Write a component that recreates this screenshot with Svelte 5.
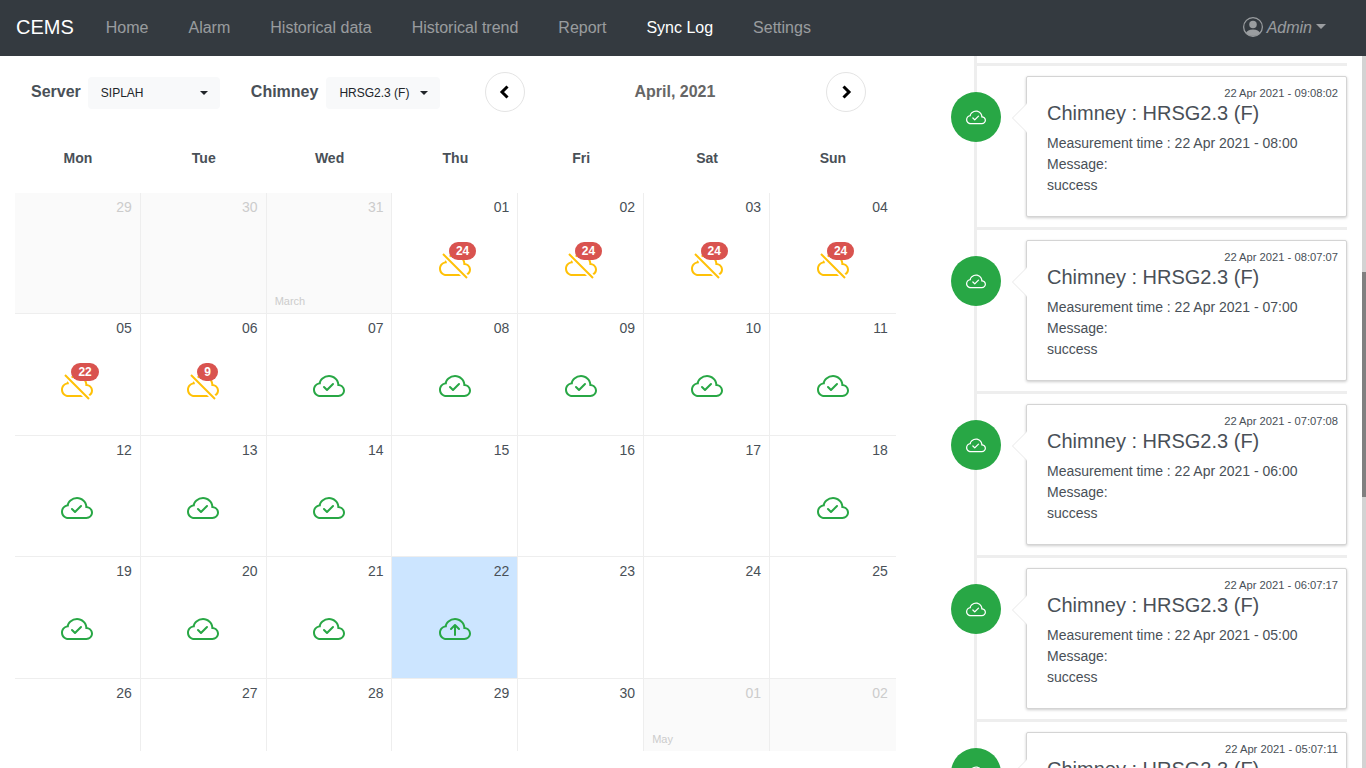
<script>
  const links = ['Home', 'Alarm', 'Historical data', 'Historical trend', 'Report', 'Sync Log', 'Settings'];
  const weekdays = ['Mon', 'Tue', 'Wed', 'Thu', 'Fri', 'Sat', 'Sun'];
  const cloud = 'M4.406 3.342A5.53 5.53 0 0 1 8 2c2.69 0 4.923 2 5.166 4.579C14.758 6.804 16 8.137 16 9.773 16 11.569 14.502 13 12.687 13H3.781C1.708 13 0 11.366 0 9.318c0-1.763 1.266-3.223 2.942-3.593.143-.863.698-1.723 1.464-2.383zm.653.757c-.757.653-1.153 1.44-1.153 2.056v.448l-.445.049C2.064 6.805 1 7.952 1 9.318 1 10.785 2.23 12 3.781 12h8.906C13.98 12 15 10.988 15 9.773c0-1.216-1.02-2.228-2.313-2.228h-.5v-.5C12.188 4.825 10.328 3 8 3a4.53 4.53 0 0 0-2.941 1.1z';
  const check = 'M10.354 6.146a.5.5 0 0 1 0 .708l-3 3a.5.5 0 0 1-.708 0l-1.5-1.5a.5.5 0 1 1 .708-.708L7 8.793l2.646-2.647a.5.5 0 0 1 .708 0z';
  const up = 'M7.646 5.146a.5.5 0 0 1 .708 0l2 2a.5.5 0 0 1-.708.708L8.5 6.707V10.5a.5.5 0 0 1-1 0V6.707L6.354 7.854a.5.5 0 1 1-.708-.708l2-2z';
  const slash = 'M3.112 5.112a3.125 3.125 0 0 0-.17.613C1.266 6.095 0 7.555 0 9.318 0 11.366 1.708 13 3.781 13H11l-1-1H3.781C2.231 12 1 10.785 1 9.318c0-1.365 1.064-2.513 2.46-2.666l.446-.05v-.447c0-.075.006-.152.018-.231l-.812-.812zm2.55-1.45l-.725-.725A5.512 5.512 0 0 1 8 2c2.69 0 4.923 2 5.166 4.579C14.758 6.804 16 8.137 16 9.773a3.2 3.2 0 0 1-1.516 2.711l-.733-.733C14.498 11.378 15 10.626 15 9.773c0-1.216-1.02-2.228-2.313-2.228h-.5v-.5C12.188 4.825 10.328 3 8 3c-.875 0-1.678.26-2.339.661z';
  const slashBar = 'M13.646 14.354l-12-12 .708-.708 12 12-.707.707z';

  const off = (d, note) => ({ d, off: true, note });
  const warn = (d, n) => ({ d, kind: 'warn', n });
  const ok = (d) => ({ d, kind: 'ok' });
  const none = (d) => ({ d });
  const days = [
    off('29'), off('30'), off('31', 'March'), warn('01', 24), warn('02', 24), warn('03', 24), warn('04', 24),
    warn('05', 22), warn('06', 9), ok('07'), ok('08'), ok('09'), ok('10'), ok('11'),
    ok('12'), ok('13'), ok('14'), none('15'), none('16'), none('17'), ok('18'),
    ok('19'), ok('20'), ok('21'), { d: '22', kind: 'up', today: true }, none('23'), none('24'), none('25'),
    none('26'), none('27'), none('28'), none('29'), none('30'), off('01', 'May'), off('02')
  ];
  const logs = [
    ['09:08:02', '08:00'],
    ['08:07:07', '07:00'],
    ['07:07:08', '06:00'],
    ['06:07:17', '05:00'],
    ['05:07:11', '04:00']
  ];
</script>

<div class="page">
  <nav class="navbar">
    <span class="brand">CEMS</span>
    <ul class="links">
      {#each links as link}
        <li class:active={link === 'Sync Log'}>{link}</li>
      {/each}
    </ul>
    <div class="user">
      <svg width="20" height="20" viewBox="0 0 16 16" fill="currentColor" aria-hidden="true">
        <path d="M13.468 12.37C12.758 11.226 11.195 10 8 10s-4.757 1.225-5.468 2.37A6.987 6.987 0 0 0 8 15a6.987 6.987 0 0 0 5.468-2.63z" />
        <path fill-rule="evenodd" d="M8 9a3 3 0 1 0 0-6 3 3 0 0 0 0 6z" />
        <path fill-rule="evenodd" d="M8 1a7 7 0 1 0 0 14A7 7 0 0 0 8 1zM0 8a8 8 0 1 1 16 0A8 8 0 0 1 0 8z" />
      </svg>
      <em>Admin</em>
      <span class="user-caret"></span>
    </div>
  </nav>

  <div class="main">
    <section class="calendar-col">
      <div class="filters">
        <span class="label">Server</span>
        <div class="select server"><span>SIPLAH</span><i class="caret"></i></div>
        <span class="label chimney-label">Chimney</span>
        <div class="select chimney"><span>HRSG2.3 (F)</span><i class="caret"></i></div>
        <div class="month-nav">
          <button class="round" aria-label="Previous month">
            <svg width="12" height="14" viewBox="0 0 12 14"><path d="M8.500 1.500 3 7 8.500 12.500" fill="none" stroke="#000" stroke-width="3" /></svg>
          </button>
          <span class="month">April, 2021</span>
          <button class="round" aria-label="Next month">
            <svg width="12" height="14" viewBox="0 0 12 14"><path d="M3.500 1.500 9 7 3.500 12.500" fill="none" stroke="#000" stroke-width="3" /></svg>
          </button>
        </div>
      </div>

      <div class="weekdays">
        {#each weekdays as w}<div>{w}</div>{/each}
      </div>

      <div class="grid">
        {#each days as day}
          <div class="cell" class:off={day.off} class:today={day.today}>
            <div class="date">{day.d}</div>
            {#if day.kind}
              <div class="icon-wrap {day.kind}">
                <svg width="32" height="32" viewBox="0 0 16 16" fill="currentColor" aria-hidden="true">
                  {#if day.kind === 'warn'}
                    <path fill-rule="evenodd" d={slash} />
                    <path d={slashBar} />
                  {:else if day.kind === 'ok'}
                    <path fill-rule="evenodd" d={check} />
                    <path d={cloud} />
                  {:else}
                    <path fill-rule="evenodd" d={up} />
                    <path d={cloud} />
                  {/if}
                </svg>
                {#if day.n}<span class="badge">{day.n}</span>{/if}
              </div>
            {/if}
            {#if day.note}<div class="note">{day.note}</div>{/if}
          </div>
        {/each}
      </div>
    </section>

    <section class="log-pane">
      {#each logs as [stamp, measured], i}
        <article class="log-item">
          <div class="log-row">
            <div class="dot">
              <svg width="20" height="20" viewBox="0 0 16 16" fill="currentColor" aria-hidden="true">
                <path fill-rule="evenodd" d={check} />
                <path d={cloud} />
              </svg>
            </div>
            <div class="card">
              <div class="stamp">22 Apr 2021 - {stamp}</div>
              <h3>Chimney : HRSG2.3 (F)</h3>
              <p>Measurement time : 22 Apr 2021 - {measured}</p>
              <p>Message:</p>
              <p>success</p>
            </div>
          </div>
        </article>
      {/each}
    </section>

    <div class="scrolltrack"><div class="scrollthumb"></div></div>
  </div>
</div>

<style>
  :global(body) {
    margin: 0;
    overflow: hidden;
    background: #fff;
    font-family: "Liberation Sans", Arial, sans-serif;
    color: #495057;
  }
  .page {
    height: 768px;
    display: flex;
    flex-direction: column;
    overflow: hidden;
  }
  .navbar {
    height: 56px;
    flex: none;
    background: #343a40;
    display: flex;
    align-items: center;
    padding: 0 40px 1px 16px;
    box-sizing: border-box;
  }
  .brand {
    color: #fff;
    font-size: 20px;
    margin-right: 32px;
  }
  .links {
    display: flex;
    gap: 40px;
    list-style: none;
    margin: 0;
    padding: 0;
    flex: 1;
    font-size: 16px;
    color: rgba(255, 255, 255, 0.5);
  }
  .links .active {
    color: #fff;
  }
  .user {
    display: flex;
    align-items: center;
    color: rgba(255, 255, 255, 0.5);
    font-size: 16px;
  }
  .user svg {
    margin-right: 4px;
    margin-top: -2px;
  }
  .user-caret {
    width: 0;
    height: 0;
    margin-left: 4px;
    margin-bottom: 3px;
    border-top: 5px solid currentColor;
    border-left: 5px solid transparent;
    border-right: 5px solid transparent;
  }
  .main {
    flex: 1;
    display: flex;
    min-height: 0;
  }
  .calendar-col {
    width: 951px;
    flex: none;
    box-sizing: border-box;
    padding: 16px 0 0 15px;
  }
  .filters {
    display: flex;
    align-items: center;
    height: 40px;
    padding-left: 16px;
  }
  .label {
    font-size: 16px;
    font-weight: 700;
    margin-right: 7px;
  }
  .chimney-label {
    margin-left: 31px;
    margin-right: 8px;
  }
  .select {
    height: 32px;
    margin-top: 2px;
    box-sizing: border-box;
    background: #f8f9fa;
    border-radius: 4px;
    display: flex;
    align-items: center;
    justify-content: space-between;
    font-size: 12px;
    color: #212529;
    padding: 0 12px 0 13px;
  }
  .server {
    width: 132px;
  }
  .chimney {
    width: 114px;
  }
  .caret {
    width: 0;
    height: 0;
    border-top: 4px solid #212529;
    border-left: 4px solid transparent;
    border-right: 4px solid transparent;
  }
  .month-nav {
    width: 381px;
    margin-left: 45px;
    display: flex;
    align-items: center;
    justify-content: space-between;
  }
  .round {
    width: 40px;
    height: 40px;
    padding: 0;
    border: 1px solid #e4e4e4;
    border-radius: 50%;
    background: #fff;
    display: flex;
    align-items: center;
    justify-content: center;
  }
  .month {
    font-size: 16px;
    font-weight: 700;
    color: #666;
    padding: 0 2px 1px 0;
  }
  .weekdays {
    width: 880.8px;
    margin-top: 31px;
    height: 30px;
    display: grid;
    grid-template-columns: repeat(7, 1fr);
    align-items: center;
    text-align: center;
    font-size: 14px;
    font-weight: 700;
  }
  .grid {
    width: 880.8px;
    margin-top: 20px;
    display: grid;
    grid-template-columns: repeat(7, 1fr);
    grid-template-rows: 121px 122px 121px 122px 72px;
  }
  .cell {
    position: relative;
    box-sizing: border-box;
    padding: 4px 8px 0 8px;
    border-right: 1px solid #eee;
    border-bottom: 1px solid #eee;
    font-size: 14px;
    line-height: 21px;
    display: flex;
    flex-direction: column;
  }
  .cell:nth-child(7n) {
    border-right: 0;
  }
  .cell:nth-last-child(-n + 7) {
    border-bottom: 0;
  }
  .off {
    background: #fafafa;
    color: #ccc;
  }
  .today {
    background: #cce5ff;
  }
  .date {
    text-align: right;
  }
  .icon-wrap {
    position: relative;
    width: 32px;
    height: 32px;
    margin: 32px auto 0;
  }
  .icon-wrap svg {
    display: block;
  }
  .ok,
  .up {
    color: #28a745;
  }
  .warn {
    color: #ffc107;
  }
  .badge {
    position: absolute;
    left: 10px;
    top: -8px;
    height: 18px;
    padding: 0 7px;
    border-radius: 9px;
    background: #d9534f;
    color: #fff;
    font-size: 12px;
    font-weight: 700;
    line-height: 18px;
  }
  .note {
    margin-top: auto;
    margin-bottom: 4px;
    font-size: 11px;
    line-height: 16px;
    color: #ccc;
  }
  .log-pane {
    position: relative;
    flex: 1;
    min-width: 0;
    overflow: hidden;
    padding-top: 7px;
    box-sizing: border-box;
  }
  .log-pane::before {
    content: "";
    position: absolute;
    left: 23px;
    top: 0;
    bottom: 0;
    width: 3px;
    background: #eee;
  }
  .log-item {
    margin: 0 15px 0 26px;
    border-top: 3px solid #eee;
    padding: 10px 0;
  }
  .log-row {
    position: relative;
    margin-left: -26px;
    display: flex;
    gap: 25px;
    align-items: flex-start;
  }
  .dot {
    width: 50px;
    height: 50px;
    flex: none;
    margin-top: 16px;
    border-radius: 50%;
    background: #28a745;
    color: #fff;
    display: flex;
    align-items: center;
    justify-content: center;
  }
  .dot svg {
    margin-top: 1px;
  }
  .card {
    position: relative;
    flex: 1;
    height: 141px;
    box-sizing: border-box;
    background: #fff;
    border: 1px solid #d4d4d4;
    border-radius: 2px;
    box-shadow: 0 1px 3px rgba(0, 0, 0, 0.2);
    padding: 8px 8px 0 20px;
  }
  .card::before,
  .card::after {
    content: "";
    position: absolute;
    width: 0;
    height: 0;
    border-style: solid;
    border-color: transparent;
  }
  .card::before {
    left: -15px;
    top: 26px;
    border-width: 15px 15px 15px 0;
    border-right-color: #e8e8e8;
  }
  .card::after {
    left: -14px;
    top: 26px;
    border-width: 15px 15px 15px 0;
    border-right-color: #fff;
  }
  .stamp {
    text-align: right;
    font-size: 11.2px;
    line-height: 16px;
  }
  h3 {
    margin: 0 0 8px;
    font-size: 20px;
    font-weight: 400;
    line-height: 24px;
  }
  p {
    margin: 0;
    font-size: 14px;
    line-height: 21px;
  }
  .scrolltrack {
    position: relative;
    width: 4px;
    flex: none;
    background: #d3d3d3;
  }
  .scrollthumb {
    position: absolute;
    top: 216px;
    left: 0;
    right: 0;
    height: 225px;
    background: #808080;
  }
</style>
